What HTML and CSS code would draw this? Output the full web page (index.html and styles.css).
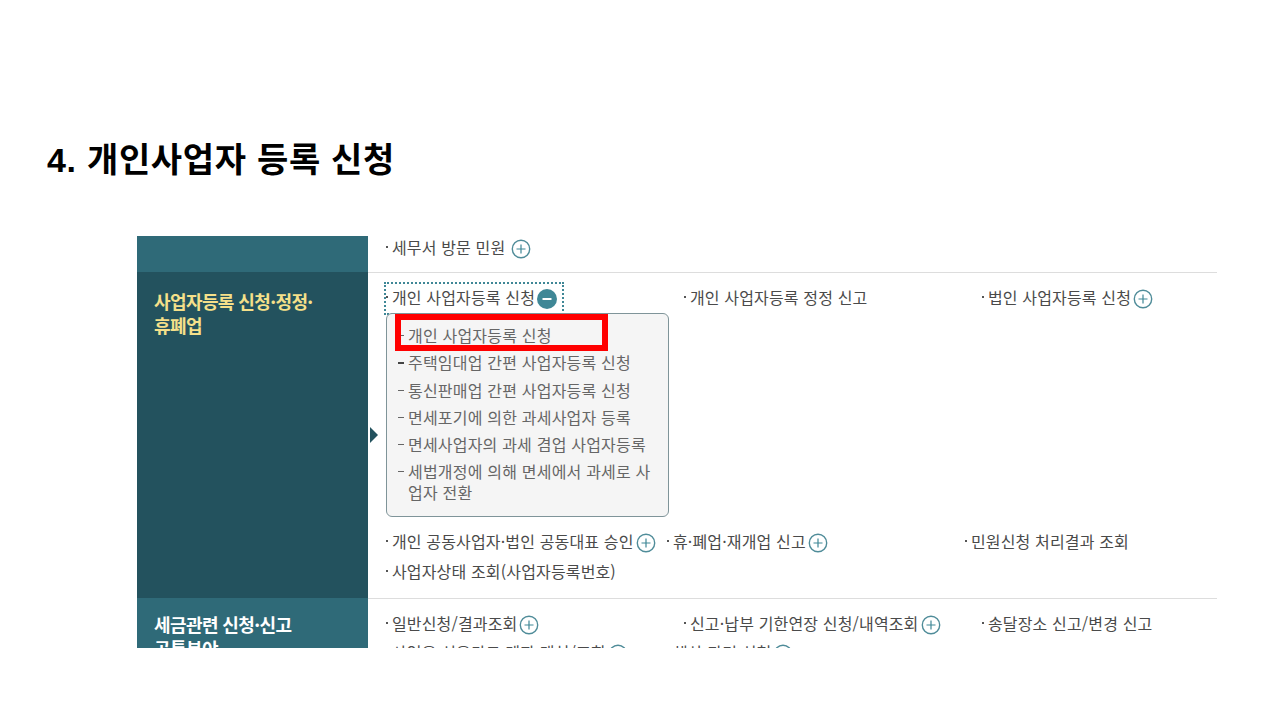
FILE: index.html
```html
<!DOCTYPE html>
<html lang="ko">
<head>
  <meta charset="utf-8">
  <title>개인사업자 등록 신청</title>
  <link rel="stylesheet" href="styles.css">
</head>
<body>
  <h1 class="title">4. 개인사업자 등록 신청</h1>

  <div class="shot">
    <div class="row row-top">
      <div class="side side-light"></div>
      <div class="main">
        <div class="items">
          <div class="item">세무서 방문 민원 <svg class="ico spaced" viewBox="0 0 20 20"><circle cx="10" cy="10" r="8.7"/><path d="M10 5.5v9M5.5 10h9"/></svg></div>
        </div>
      </div>
    </div>

    <div class="row row-mid">
      <div class="side side-dark"><strong class="yellow">사업자등록 신청·정정·<br>휴폐업</strong></div>
      <div class="main main-mid">
        <div class="arrow"></div>
        <div class="cols">
          <div class="col-open">
            <div class="focus">
              <div class="item">개인 사업자등록 신청<svg class="ico-on" viewBox="0 0 20 20"><circle cx="10" cy="10" r="10"/><path d="M5.5 10h9"/></svg></div>
            </div>
            <ul class="sub">
              <li>개인 사업자등록 신청</li>
              <li class="bold-dash">주택임대업 간편 사업자등록 신청</li>
              <li>통신판매업 간편 사업자등록 신청</li>
              <li>면세포기에 의한 과세사업자 등록</li>
              <li>면세사업자의 과세 겸업 사업자등록</li>
              <li>세법개정에 의해 면세에서 과세로 사업자 전환</li>
            </ul>
            <div class="mark"></div>
          </div>
          <div class="item col-b">개인 사업자등록 정정 신고</div>
          <div class="item col-c">법인 사업자등록 신청<svg class="ico" viewBox="0 0 20 20"><circle cx="10" cy="10" r="8.7"/><path d="M10 5.5v9M5.5 10h9"/></svg></div>
        </div>
        <div class="line line-a">
          <div class="item w-a">개인 공동사업자·법인 공동대표 승인<svg class="ico" viewBox="0 0 20 20"><circle cx="10" cy="10" r="8.7"/><path d="M10 5.5v9M5.5 10h9"/></svg></div>
          <div class="item w-b">휴·폐업·재개업 신고<svg class="ico" viewBox="0 0 20 20"><circle cx="10" cy="10" r="8.7"/><path d="M10 5.5v9M5.5 10h9"/></svg></div>
          <div class="item">민원신청 처리결과 조회</div>
        </div>
        <div class="line line-b">
          <div class="item">사업자상태 조회(사업자등록번호)</div>
        </div>
      </div>
    </div>

    <div class="row row-low">
      <div class="side side-light side-low"><strong>세금관련 신청·신고<br>공통분야</strong></div>
      <div class="main main-low">
        <div class="cols cols-low">
          <div class="item">일반신청/결과조회<svg class="ico" viewBox="0 0 20 20"><circle cx="10" cy="10" r="8.7"/><path d="M10 5.5v9M5.5 10h9"/></svg></div>
          <div class="item">신고·납부 기한연장 신청/내역조회<svg class="ico" viewBox="0 0 20 20"><circle cx="10" cy="10" r="8.7"/><path d="M10 5.5v9M5.5 10h9"/></svg></div>
          <div class="item">송달장소 신고/변경 신고</div>
        </div>
        <div class="line line-c">
          <div class="item w-c">사업용 신용카드 계좌 개설/조회<svg class="ico" viewBox="0 0 20 20"><circle cx="10" cy="10" r="8.7"/><path d="M10 5.5v9M5.5 10h9"/></svg></div>
          <div class="item">해산 관리 신청<svg class="ico" viewBox="0 0 20 20"><circle cx="10" cy="10" r="8.7"/><path d="M10 5.5v9M5.5 10h9"/></svg></div>
        </div>
      </div>
    </div>
  </div>
</body>
</html>
```

FILE: styles.css
```css
* {
  margin: 0;
  padding: 0;
  box-sizing: border-box;
}

body {
  width: 1280px;
  height: 720px;
  background: #fff;
  color: #444;
  font-family: "Noto Sans CJK KR", "Noto Sans", sans-serif;
  overflow: hidden;
}

.title {
  padding: 138px 0 0 47px;
  height: 236px;
  font-family: "Liberation Sans", "Noto Sans CJK KR", sans-serif;
  font-size: 34px;
  line-height: 44px;
  letter-spacing: 0.7px;
  font-weight: 700;
  color: #000;
}

.shot {
  width: 1080px;
  height: 412px;
  margin-left: 137px;
  overflow: hidden;
}

.row {
  display: flex;
}

.row-top { height: 36px; }
.row-mid { height: 326px; }
.row-low { height: 120px; }

.side {
  width: 231px;
  flex: none;
  padding: 17px 0 0 17px;
  color: #fff;
  font-size: 18px;
  line-height: 24px;
  letter-spacing: -0.6px;
}

.side-low { padding-top: 14px; }

.side-light { background: #2f6a78; }
.side-dark { background: #23525e; }

.yellow { color: #f5e08a; }

.main {
  flex: 1;
  position: relative;
  padding-left: 17px;
}

.main-mid,
.main-low {
  border-top: 1px solid #ddd;
}

.items {
  margin-top: -1px;
}

.item {
  display: flex;
  align-items: center;
  font-size: 16px;
  letter-spacing: 0.15px;
  line-height: 24px;
  height: 24px;
  color: #4a4a4a;
  white-space: nowrap;
}

.item::before {
  content: "";
  width: 2px;
  height: 2px;
  margin: 0 4px 1px 1px;
  background: #555;
  flex: none;
}

.ico, .ico-on {
  width: 20px;
  height: 20px;
  margin-left: 2px;
  margin-top: 3px;
  flex: none;
}

.spaced { margin-left: 6px; }

.ico circle {
  fill: #fff;
  stroke: #4f8c99;
  stroke-width: 1.4;
}

.ico path {
  stroke: #3f8796;
  stroke-width: 1.2;
  fill: none;
}

.ico-on circle { fill: #3f8796; }

.ico-on path {
  stroke: #fff;
  stroke-width: 2;
  fill: none;
}

.cols {
  display: grid;
  grid-template-columns: 298px 298px 1fr;
  padding-top: 12px;
}

.col-open {
  position: relative;
  height: 232px;
  margin-top: -3px;
}

.focus {
  width: 180px;
  height: 33px;
  margin-left: -1px;
  padding: 1px 0 0 0;
  border: 2px dotted #3f8796;
}

.focus .item {
  margin-left: -1px;
}

.sub {
  width: 283px;
  height: 204px;
  margin: -2px 0 0 1px;
  padding: 11px 14px 0 11px;
  list-style: none;
  background: #f5f5f5;
  border: 1px solid #7f9499;
  border-radius: 6px;
  position: relative;
}

.sub li {
  position: relative;
  padding-left: 10px;
  margin-bottom: 6.3px;
  font-size: 16px;
  letter-spacing: 0.2px;
  line-height: 21px;
  color: #666;
}

.sub li::before {
  content: "";
  position: absolute;
  left: 0;
  top: 10px;
  width: 6px;
  height: 1px;
  background: #666;
}

.sub li.bold-dash::before {
  height: 2px;
  background: #444;
}

.mark {
  position: absolute;
  left: 10px;
  top: 32px;
  width: 213px;
  height: 37px;
  border: 6px solid #f00;
}

.arrow {
  position: absolute;
  left: 2px;
  top: 154px;
  border-left: 8px solid #23525e;
  border-top: 8px solid transparent;
  border-bottom: 8px solid transparent;
}

.line {
  display: flex;
}

.line-a { padding-top: 15px; }
.line-b { padding-top: 6px; }

.w-a { width: 281px; }
.w-b { width: 298px; }

.line-c { padding-top: 5px; }
.w-c { width: 281px; }
```
